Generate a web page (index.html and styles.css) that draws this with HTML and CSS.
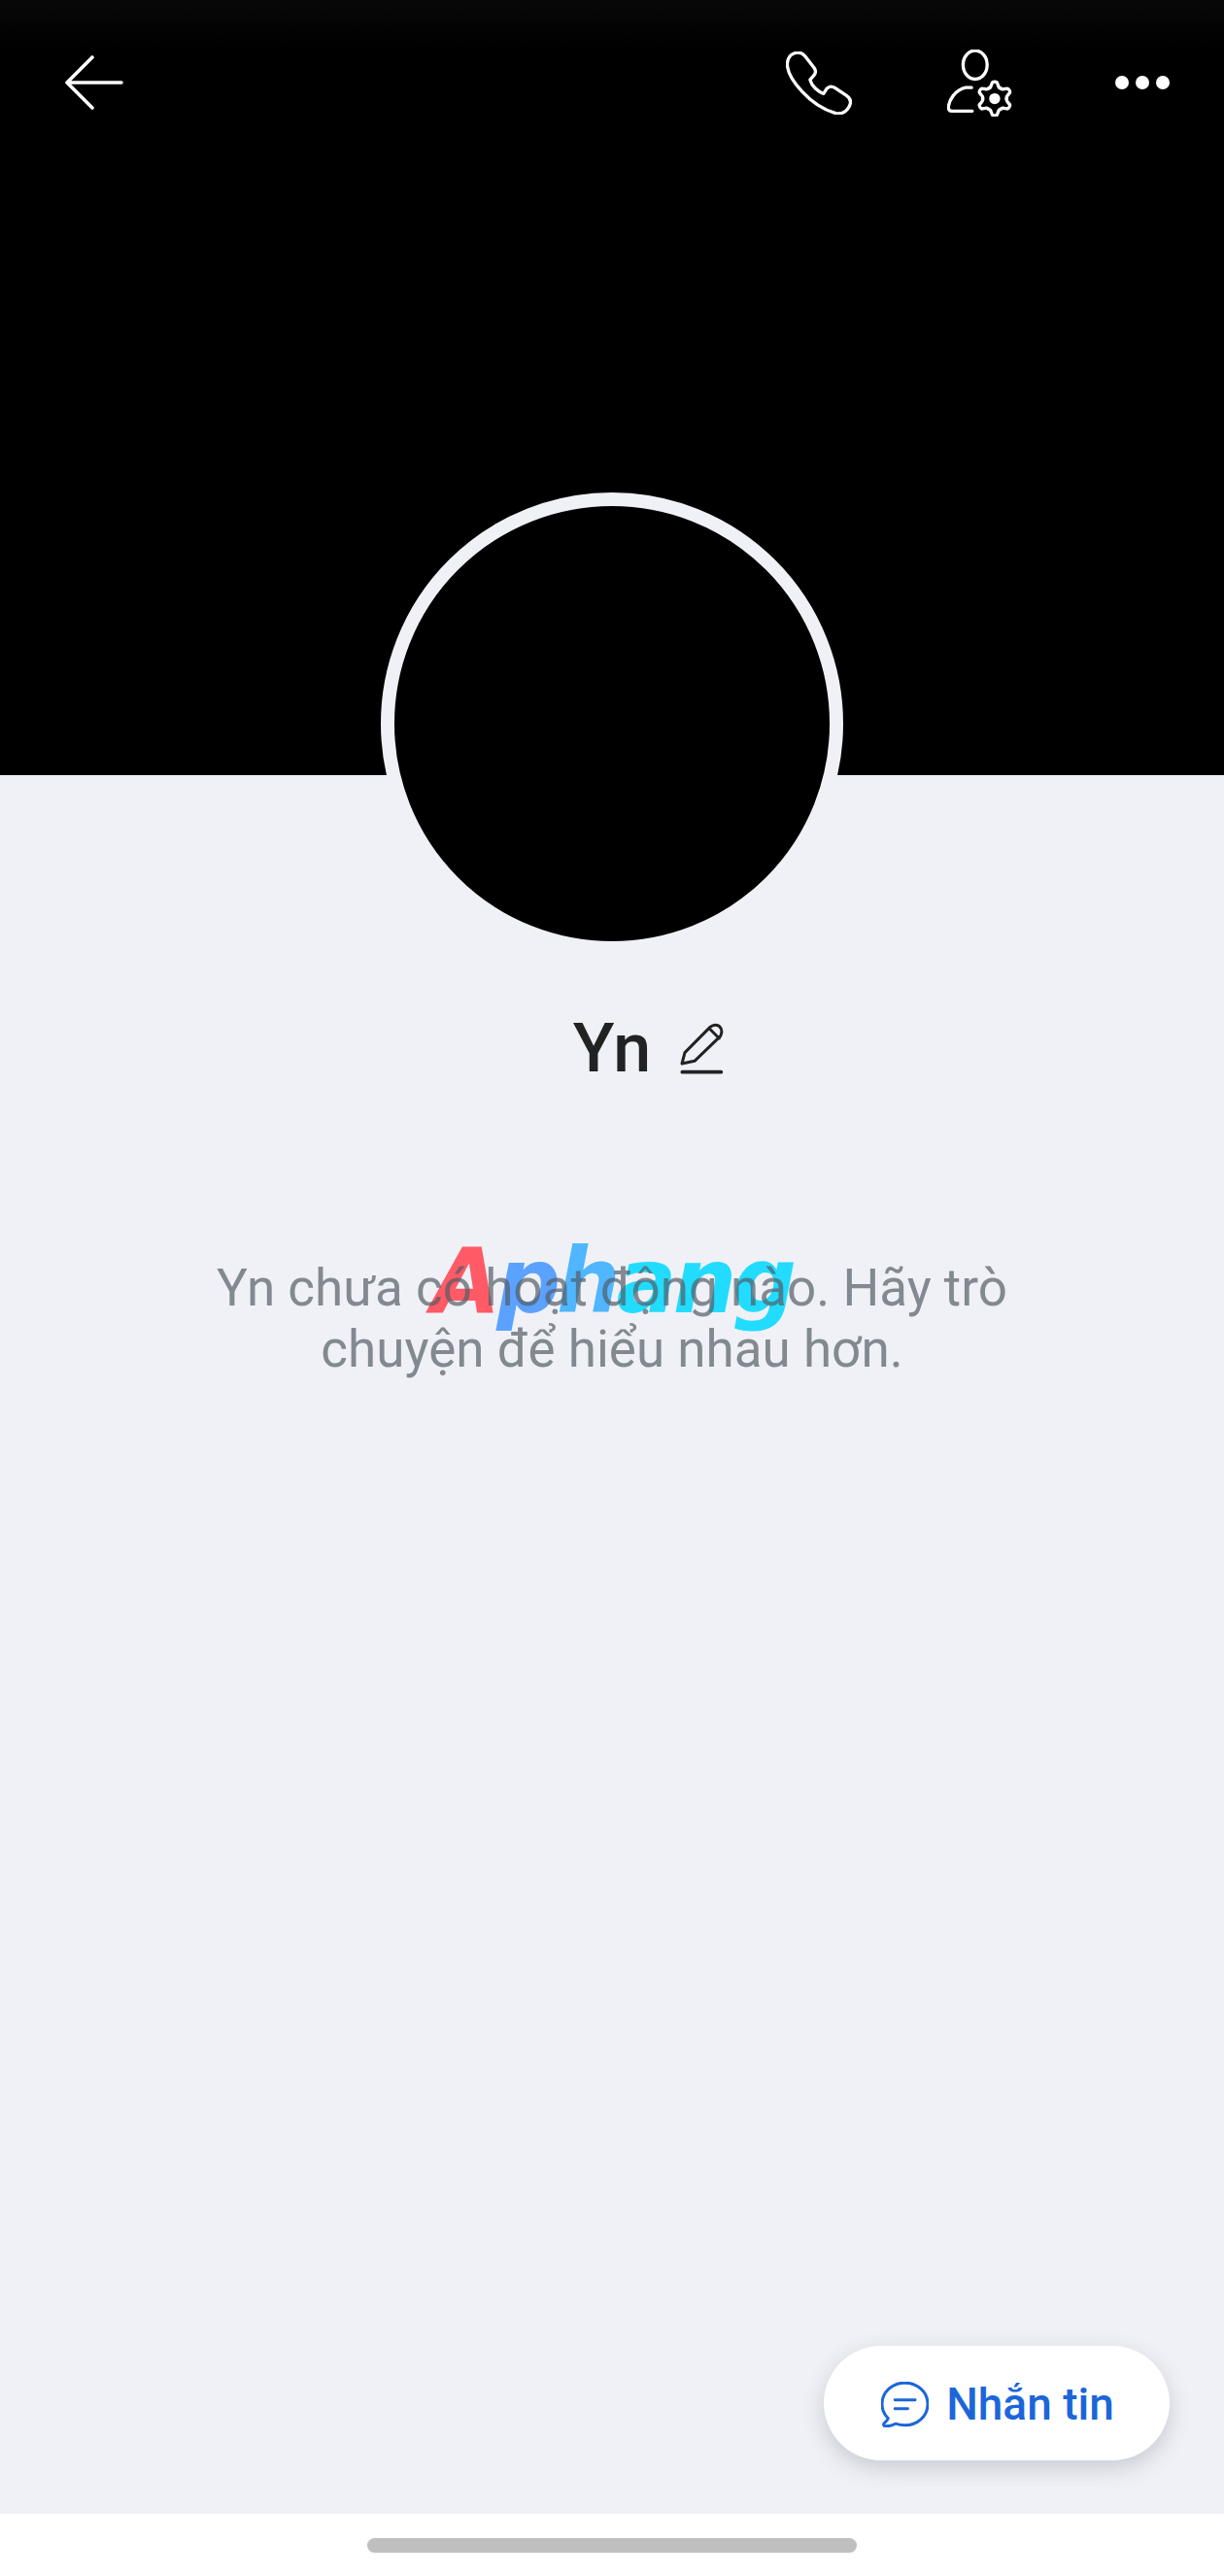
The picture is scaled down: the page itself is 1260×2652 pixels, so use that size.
FILE: index.html
```html
<!DOCTYPE html>
<html lang="vi">
<head>
    <meta charset="UTF-8">
    <title>Yn</title>
    <link rel="stylesheet" href="styles.css">
</head>
<body>
    <div class="page">
        <header class="cover">
            <div class="topbar">
                <svg class="icon-back" viewBox="0 0 60 56" fill="none" stroke="#fff" stroke-width="3.6" stroke-linecap="round" stroke-linejoin="round">
                    <path d="M28 2 L2 28 L28 54 M2 28 H58"/>
                </svg>
                <svg class="icon-phone" viewBox="145 97 205 196" fill="none" stroke="#fff" stroke-width="10" stroke-linejoin="round">
                    <path d="M170 103 C155 108 147 125 150 145 C155 180 215 265 300 289 C320 293 340 280 345 258 C347 248 342 240 333 234 L297 210 C288 204 279 205 272 212 L262 228 C245 222 225 205 220 185 L233 170 C238 163 238 155 233 148 L205 112 C195 100 183 98 170 103 Z"/>
                </svg>
                <svg class="icon-person" viewBox="645 95 200 206" fill="none" stroke="#fff" stroke-width="10" stroke-linecap="round">
                    <defs>
                        <path id="gearTooth" d="M-18.5 -32 Q-13 -33 -11 -40 L-8 -48 Q-7 -52 0 -52 Q7 -52 8 -48 L11 -40 Q13 -33 18.5 -32"/>
                    </defs>
                    <ellipse cx="731" cy="142" rx="37" ry="44"/>
                    <path d="M720 212 H702 C668 220 652 250 649 270 C648 279 652 284 660 284 H722"/>
                    <g transform="translate(791 246)">
                        <use href="#gearTooth"/>
                        <use href="#gearTooth" transform="rotate(60)"/>
                        <use href="#gearTooth" transform="rotate(120)"/>
                        <use href="#gearTooth" transform="rotate(180)"/>
                        <use href="#gearTooth" transform="rotate(240)"/>
                        <use href="#gearTooth" transform="rotate(300)"/>
                        <circle r="17" fill="#fff" stroke="none"/>
                    </g>
                </svg>
                <div class="dots"><span></span><span></span><span></span></div>
            </div>
        </header>

        <main class="content">
            <div class="avatar"></div>

            <div class="name-row">
                <span></span>
                <h1 class="name">Yn</h1>
                <svg class="icon-edit" viewBox="420 95 135 162" fill="none" stroke="#222" stroke-width="9" stroke-linejoin="round" stroke-linecap="round">
                    <path d="M426 224 L435 190 L513 111 Q526 100 541 108 Q554 120 545 139 L465 216 Z M511 116 L541 146"/>
                    <path d="M427 250 H547" stroke-width="11"/>
                </svg>
            </div>

            <div class="message-wrap">
                <div class="watermark"><span class="wm-red">A</span><span class="wm-blue">p</span><span class="wm-sky">h</span><span class="wm-cyan">ang</span></div>
                <p class="message">Yn chưa có hoạt động nào. Hãy trò chuyện để hiểu nhau hơn.</p>
            </div>

            <button class="chat-btn" type="button">
                <svg class="icon-chat" viewBox="262 184 148 141" fill="none" stroke="#1b66d9" stroke-width="9" stroke-linecap="round" stroke-linejoin="round">
                    <path d="M284 297 C270 284 265 268 265 253 C265 215 297 187 336 187 C375 187 407 215 407 253 C407 291 375 319 336 319 C326 319 316 317 307 314 C298 319 288 322 276 322 C270 322 268 316 272 312 C278 307 283 302 284 297 Z"/>
                    <path d="M305 240 H368 M305 267 H345"/>
                </svg>
                Nhắn tin
            </button>
        </main>

        <footer class="navbar"><div class="home-bar"></div></footer>
    </div>
</body>
</html>
```

FILE: styles.css
```css
* { box-sizing: border-box; }
body { margin: 0; font-family: Roboto, "Liberation Sans", sans-serif; background: #fff; }
.page { height: 2652px; display: flex; flex-direction: column; overflow: hidden; }

.cover { height: 798px; background: #000; flex: none; }
.topbar { height: 170px; display: flex; align-items: center; padding: 0 56px 0 67px; background: linear-gradient(#080808, #000 50px); }
.icon-back { width: 60px; height: 56px; margin-right: auto; }
.icon-phone { width: 68px; height: 65px; margin-right: 98px; }
.icon-person { width: 67px; height: 69px; margin-right: 106px; }
.dots { display: flex; gap: 7px; }
.dots span { width: 14px; height: 14px; border-radius: 50%; background: #fff; }

.content { flex: 1; display: flex; flex-direction: column; align-items: center; background: #f0f1f6; }
.avatar { width: 476px; height: 476px; margin-top: -291px; border-radius: 50%; background: #000; border: 14px solid #f0f1f6; flex: none; }

.name-row { width: 100%; margin-top: 56px; display: grid; grid-template-columns: 1fr auto 1fr; align-items: center; gap: 30px; }
.name { margin: 0; font-size: 70px; line-height: 80px; font-weight: 500; color: #222; }
.icon-edit { width: 45px; height: 54px; }

.message-wrap { position: relative; width: 860px; margin-top: 176px; }
.message { position: relative; margin: 0; font-size: 53px; line-height: 63px; color: rgba(84, 92, 103, .7); text-align: center; }
.watermark { position: absolute; top: -25px; left: 244px; font-family: "DejaVu Sans", sans-serif; font-size: 92px; line-height: 100px; font-weight: 700; font-style: italic; letter-spacing: -4px; white-space: nowrap; }
.wm-red { color: #ff5a66; }
.wm-blue { color: #5ba2ff; }
.wm-sky { color: #4fb6ff; }
.wm-cyan { color: #22dcff; }

.chat-btn { margin: auto 56px 55px auto; width: 356px; height: 118px; padding: 2px 0 0 2px; display: flex; align-items: center; justify-content: center; gap: 18px; border: none; border-radius: 59px; background: #fff; box-shadow: 0 8px 22px rgba(60, 70, 90, .22); font-family: inherit; font-size: 46px; font-weight: 500; color: #1b66d9; }
.icon-chat { width: 49px; height: 47px; }

.navbar { height: 64px; flex: none; background: #fff; padding-top: 25px; display: flex; justify-content: center; }
.home-bar { width: 504px; height: 15px; border-radius: 8px; background: #bfbfbf; }
```
